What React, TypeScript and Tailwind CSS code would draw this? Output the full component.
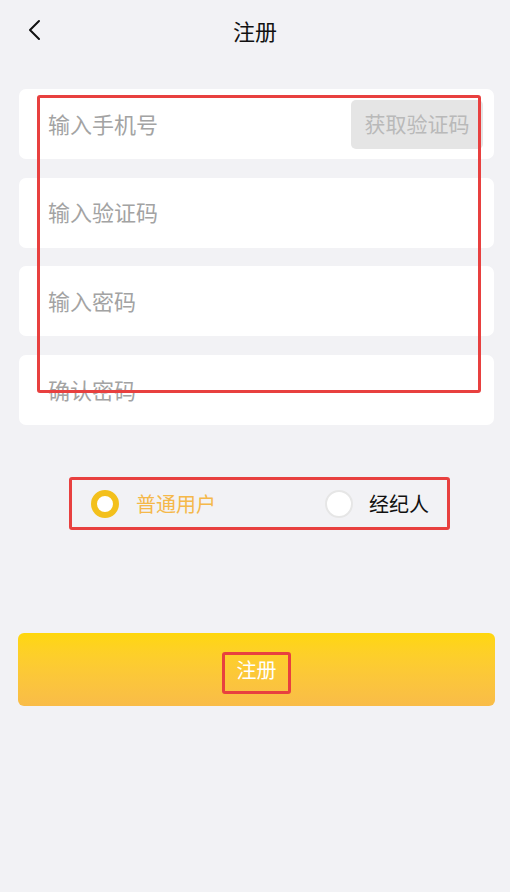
const fields = ["输入手机号", "输入验证码", "输入密码", "确认密码"];

function RedBox({ className }: { className: string }) {
  return (
    <div
      className={`pointer-events-none absolute rounded-[3px] border-[3px] border-[#e8403f] ${className}`}
    />
  );
}

export default function App() {
  return (
    <div
      className="relative min-h-[892px] w-full bg-[#f2f2f5]"
      style={{ fontFamily: '"Noto Sans CJK SC", "Noto Sans", sans-serif' }}
    >
      {/* nav bar */}
      <div className="grid h-[60px] grid-cols-[1fr_auto_1fr] items-center">
        <div className="pl-[26px]">
          <svg width="18" height="22" viewBox="0 0 18 22" fill="none">
            <polyline
              points="13,2 4,11 13,20"
              stroke="#111"
              strokeWidth="2"
              strokeLinecap="round"
              strokeLinejoin="round"
            />
          </svg>
        </div>
        <h1 className="text-[22px] font-normal text-[#111]">注册</h1>
        <div />
      </div>

      {/* inputs */}
      <div className="ml-[19px] mt-[29px] flex w-[475px] flex-col gap-[18.7px]">
        {fields.map((label, i) => (
          <div
            key={label}
            className="flex h-[70px] items-center justify-between rounded-[7px] bg-white pl-[29px] pr-[11px]"
          >
            <span className="-mt-[2px] text-[22px] text-[#a3a3a3]">{label}</span>
            {i === 0 && (
              <button className="flex h-[49px] w-[132px] items-center justify-center rounded-[5px] bg-[#e5e5e5] text-[21px] text-[#b9b9b9]">
                获取验证码
              </button>
            )}
          </div>
        ))}
      </div>

      {/* user type */}
      <div className="mt-[65px] flex h-[28px] items-center">
        <div className="ml-[91px] flex items-center">
          <span className="h-[28px] w-[28px] rounded-full border-[6px] border-[#f3c01c] bg-white" />
          <span className="ml-[17px] text-[20px] text-[#f5b84a]">普通用户</span>
        </div>
        <div className="ml-[109px] flex items-center">
          <span className="h-[28px] w-[28px] rounded-full border-2 border-[#e6e6e6] bg-white" />
          <span className="ml-[16px] text-[20px] text-[#111]">经纪人</span>
        </div>
      </div>

      {/* submit */}
      <button className="ml-[18px] mt-[115px] flex h-[73px] w-[477px] items-center justify-center rounded-[6px] bg-gradient-to-b from-[#ffd70a] to-[#f9bc48] text-[20px] text-white">
        注册
      </button>

      <RedBox className="left-[37px] top-[95px] h-[298px] w-[444px]" />
      <RedBox className="left-[69px] top-[477px] h-[53px] w-[381px]" />
      <RedBox className="left-[222px] top-[652px] h-[42px] w-[69px]" />
    </div>
  );
}
